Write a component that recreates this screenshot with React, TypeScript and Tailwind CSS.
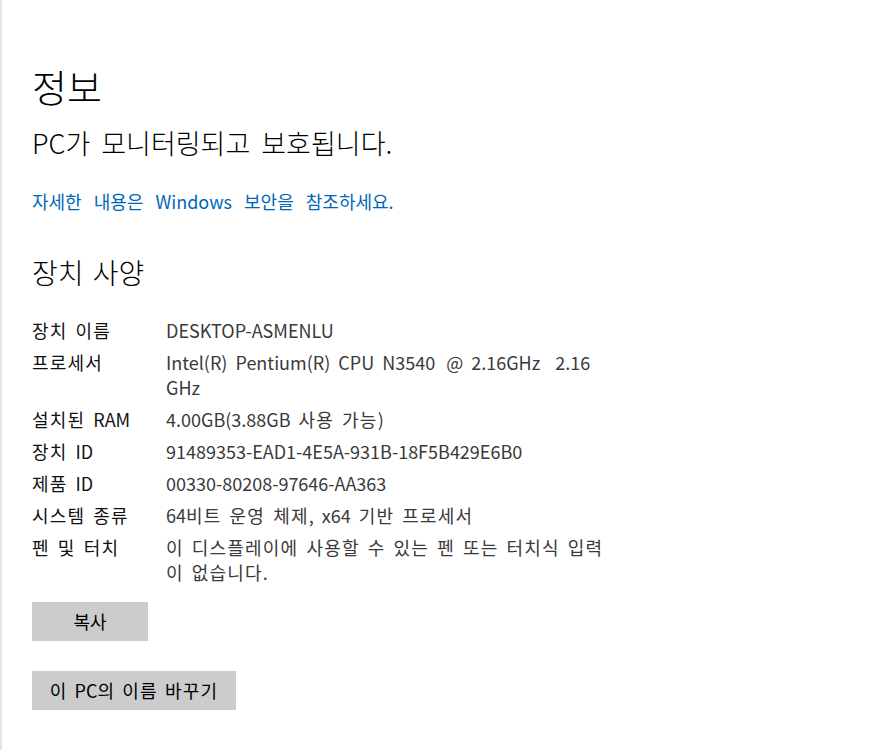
import React from "react";

const HANGUL = /([\uAC00-\uD7A3\u3131-\u318E]+)/;

function ko(text: string): React.ReactNode[] {
  return text.split(HANGUL).map((part, i) =>
    HANGUL.test(part) ? (
      <span key={i} className="tracking-[1.2px]">
        {part}
      </span>
    ) : (
      <React.Fragment key={i}>{part}</React.Fragment>
    )
  );
}

const Gap = ({ w }: { w: "s" | "m" | "l" }) => (
  <span className={w === "s" ? "inline-block w-[8px]" : w === "m" ? "inline-block w-[11px]" : "inline-block w-[15px]"} />
);

const rows: { label: string; value: React.ReactNode }[] = [
  { label: "장치 이름", value: "DESKTOP-ASMENLU" },
  {
    label: "프로세서",
    value: (
      <>
        Intel(R) Pentium(R) CPU
        <Gap w="s" />
        N3540
        <Gap w="m" />
        @ 2.16GHz
        <Gap w="l" />
        2.16
        <br />
        GHz
      </>
    ),
  },
  { label: "설치된 RAM", value: ko("4.00GB(3.88GB 사용 가능)") },
  { label: "장치 ID", value: "91489353-EAD1-4E5A-931B-18F5B429E6B0" },
  { label: "제품 ID", value: "00330-80208-97646-AA363" },
  { label: "시스템 종류", value: ko("64비트 운영 체제, x64 기반 프로세서") },
  {
    label: "펜 및 터치",
    value: (
      <>
        {ko("이 디스플레이에 사용할 수 있는 펜 또는 터치식 입력")}
        <br />
        {ko("이 없습니다.")}
      </>
    ),
  },
];

export default function App() {
  return (
    <div
      className="min-h-[750px] w-full bg-white border-l-2 border-[#e4e4e4] pl-[30px] pt-[62px]"
      style={{ fontFamily: '"Noto Sans CJK KR", "Noto Sans", sans-serif' }}
    >
      <h1 className="text-[38px] leading-[48px] text-black font-light">정보</h1>
      <p className="mt-[15px] text-[27px] leading-[36px] text-black font-light [word-spacing:5px]">
        PC가 모니터링되고 보호됩니다.
      </p>
      <p className="mt-[27px] text-[18px] leading-[26px] text-[#0067b8] [word-spacing:8px]">
        자세한 내용은 Windows 보안을 참조하세요.
      </p>
      <h2 className="mt-[40px] text-[28px] leading-[36px] text-black font-light [word-spacing:3px]">장치 사양</h2>
      <div className="mt-[28px] flex flex-col gap-[7px]">
        {rows.map((r) => (
          <div key={r.label} className="flex text-[18px] leading-[25px] [word-spacing:4px]">
            <div className="w-[134px] shrink-0 text-[#111]">{ko(r.label)}</div>
            <div className="text-[#3a3a3a]">{r.value}</div>
          </div>
        ))}
      </div>
      <div className="mt-[17px] flex flex-col items-start gap-[30px]">
        <button className="h-[39px] w-[116px] bg-[#cccccc] text-[18px] text-black">복사</button>
        <button className="h-[39px] w-[204px] bg-[#cccccc] text-[18px] text-black [word-spacing:3px]">
          {ko("이 PC의 이름 바꾸기")}
        </button>
      </div>
    </div>
  );
}
